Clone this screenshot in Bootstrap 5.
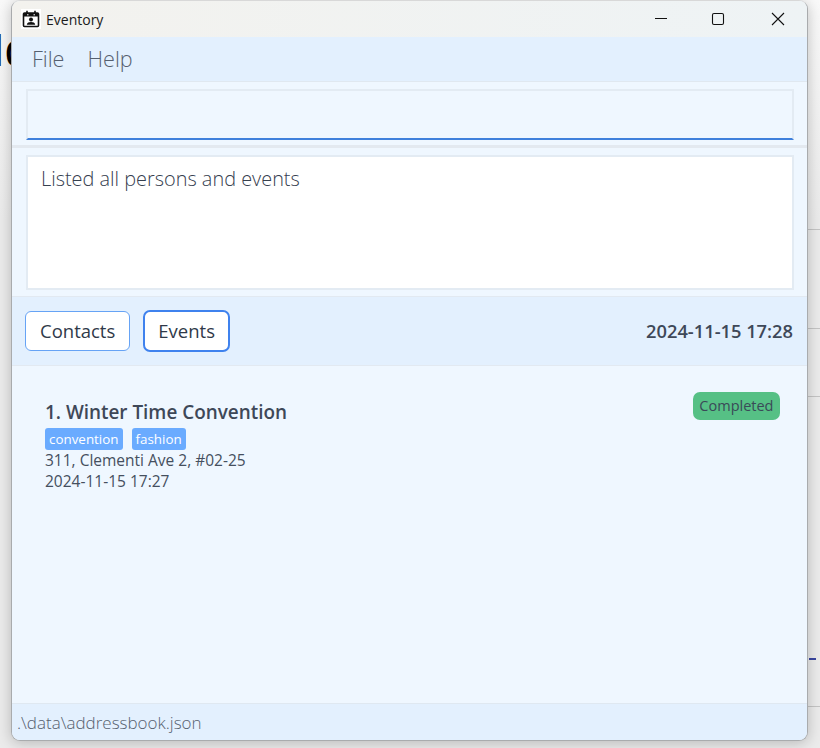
<!DOCTYPE html>
<html lang="en">
<head>
<meta charset="utf-8">
<title>Eventory</title>
<link href="https://cdn.jsdelivr.net/npm/bootstrap@5.3.0/dist/css/bootstrap.min.css" rel="stylesheet">
<style>
html,body{height:100%}
body{background:linear-gradient(#f9f9f9,#ebebeb 220px);overflow:hidden;position:relative;font-family:"Open Sans","Noto Sans",sans-serif;color:#3c4657}
.desk-glyph{position:absolute;left:-8px;top:27px;font:400 46px/1 "Liberation Sans",sans-serif;color:#000}
.desk-rule{position:absolute;left:808px;width:12px;height:1px;background:#c4c4c4}
.desk-dash{position:absolute;left:809px;top:658px;width:7px;height:2px;background:#3a46a0}
.app-win{position:absolute;left:11px;top:0;width:797px;height:741px;border:1px solid #a9abad;border-top-color:#d8d8d8;border-radius:9px;overflow:hidden;background:#eff7ff;box-shadow:0 2px 14px rgba(0,0,0,.22);display:flex;flex-direction:column}
.title-bar{height:36px;background:linear-gradient(90deg,#f3f2ee,#eef3f5);flex:none;font:400 14px "Open Sans",sans-serif;color:#1b1b1b}
.app-icon{width:20px;height:20px;background:#fff;margin-left:9px;margin-right:5px}
.win-ctl{height:36px;display:flex;align-items:center;justify-content:center}
.ctl-min{width:54px}
.ctl-max{width:60px}
.ctl-close{width:59px}
.menu-bar{height:45px;background:#e3f0fe;border-bottom:1px solid #e0e8f0;flex:none;padding-left:20px;gap:23px;font-size:21.6px;font-weight:300;color:#56606f}
.cmd-pane{height:66px;flex:none;padding:7px 13px 5px 14px;border-bottom:3px solid #e3e9f0}
.cmd-input{display:block;width:100%;height:100%;background:#eff7ff;border:2px solid #e3ebf3;border-bottom:2px solid #3f80dc;border-radius:0}
.cmd-input:focus{outline:0}
.res-pane{height:149px;flex:none;padding:7px 13px 6px 14px;border-bottom:1px solid #e2e9f1}
.res-box{height:100%;background:#fff;border:2px solid #e3ebf3;padding:8px 13px;font-size:19.9px;font-weight:300;line-height:28px;color:#36404f}
.tab-bar{height:69px;flex:none;background:#e3f0fe;border-bottom:1px solid #e2e9f1;padding:0 14px 0 13px}
.tab-btn{height:40px;background:#fff;border:1px solid #66a3f5;border-radius:6px;color:#2f3949;font-size:18.5px;padding:0 14px;line-height:36px}
.tab-btn.is-on{border:2px solid #3f82ee;height:42px;padding:0 13px;line-height:38px;border-radius:7px;margin-left:13px}
.clock-txt{font-size:18.3px;font-weight:600;color:#3e4858}
.ev-list{flex:1 1 auto;padding:26px 27px 0 33px}
.ev-name{font-size:18.9px;font-weight:600;line-height:26px;margin-top:7px;color:#3e4858}
.tag-row{gap:9px;margin-top:3px}
.ev-tag{background:#6aabff;color:#fff;font-size:13.4px;font-weight:500;line-height:22px;height:22px;padding:0 4px;border-radius:3px}
.ev-line{font-size:15.5px;line-height:21px;color:#454f5e}
.ev-state{background:#56c085;color:#3a4a58;font-size:14.5px;line-height:28px;height:28px;padding:0 6.5px;border-radius:7px}
.stat-bar{height:37px;flex:none;background:#e3f0fe;border-top:1px solid #dfe8f1;padding:2px 0 0 5px;font-size:17px;font-weight:300;color:#56606f}
</style>
</head>
<body>
<div class="desk-glyph">Id</div>
<div class="desk-rule" style="top:229px"></div>
<div class="desk-rule" style="top:328px"></div>
<div class="desk-rule" style="top:396px"></div>
<div class="desk-rule" style="top:706px"></div>
<div class="desk-dash"></div>
<div class="app-win">
  <div class="title-bar d-flex align-items-center">
    <div class="app-icon d-flex align-items-center justify-content-center">
      <svg width="18" height="18" viewBox="0 0 18 18"><rect x="1.5" y="3" width="15" height="13.5" rx="1" fill="#fff" stroke="#111" stroke-width="1.6"/><rect x="1.5" y="3" width="15" height="3.5" fill="#111"/><path d="M5 .8v3.4M13 .8v3.4" stroke="#111" stroke-width="1.6"/><path d="M5 4.8h1.5M11.5 4.8H13" stroke="#fff" stroke-width="1"/><circle cx="9" cy="9.6" r="2" fill="#111"/><path d="M4.8 14.8c0-2.2 2.2-2.9 4.2-2.9s4.2.7 4.2 2.9z" fill="#111"/></svg>
    </div>
    <span class="flex-grow-1">Eventory</span>
    <div class="win-ctl ctl-min"><svg width="14" height="14" viewBox="0 0 14 14"><path d="M1 6.5h12" stroke="#111" stroke-width="1"/></svg></div>
    <div class="win-ctl ctl-max"><svg width="14" height="14" viewBox="0 0 14 14"><rect x="1.5" y="1.5" width="11" height="11" rx="1.5" fill="none" stroke="#111" stroke-width="1.1"/></svg></div>
    <div class="win-ctl ctl-close"><svg width="14" height="14" viewBox="0 0 14 14"><path d="M1 1l12 12M13 1L1 13" stroke="#111" stroke-width="1.1"/></svg></div>
  </div>
  <div class="menu-bar d-flex align-items-center"><span>File</span><span>Help</span></div>
  <div class="cmd-pane"><input class="cmd-input" type="text" aria-label="Command"></div>
  <div class="res-pane"><div class="res-box">Listed all persons and events</div></div>
  <div class="tab-bar d-flex align-items-center">
    <button class="tab-btn" type="button">Contacts</button>
    <button class="tab-btn is-on" type="button">Events</button>
    <span class="clock-txt ms-auto">2024-11-15 17:28</span>
  </div>
  <div class="ev-list d-flex justify-content-between align-items-start">
    <div>
      <div class="ev-name">1. Winter Time Convention</div>
      <div class="tag-row d-flex"><span class="ev-tag">convention</span><span class="ev-tag">fashion</span></div>
      <div class="ev-line">311, Clementi Ave 2, #02-25</div>
      <div class="ev-line">2024-11-15 17:27</div>
    </div>
    <span class="ev-state">Completed</span>
  </div>
  <div class="stat-bar d-flex align-items-center">.\data\addressbook.json</div>
</div>
<script src="https://cdn.jsdelivr.net/npm/bootstrap@5.3.0/dist/js/bootstrap.bundle.min.js"></script>
</body>
</html>
